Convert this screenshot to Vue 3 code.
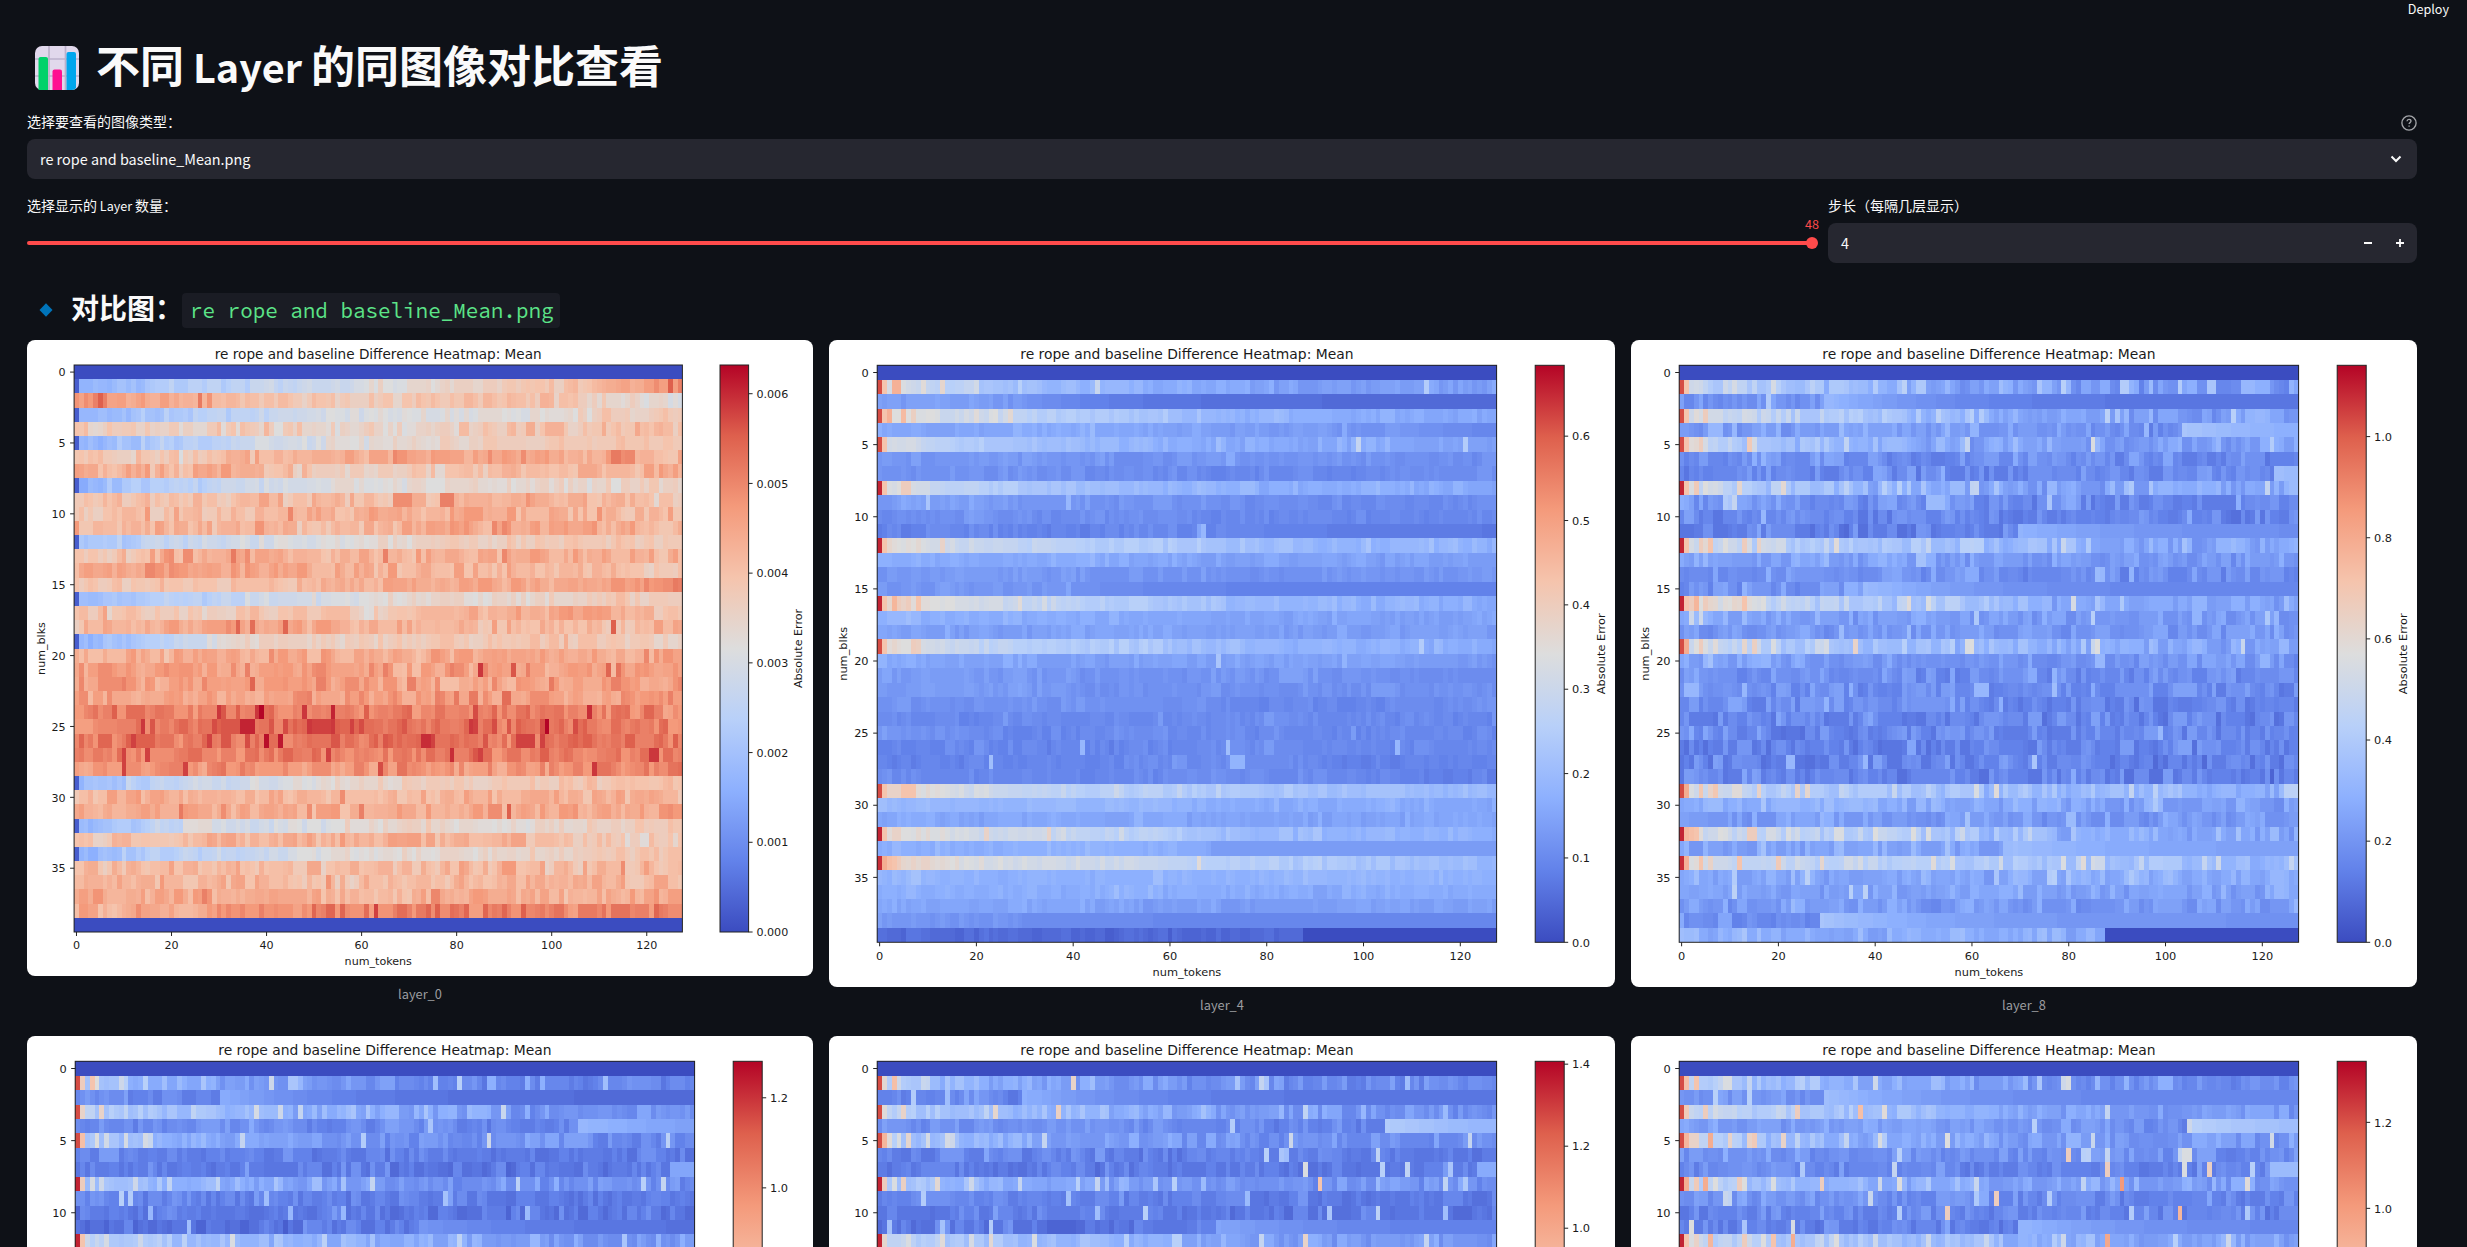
<script setup>
const COLS = 128
const ROWS = 40
const LEVELS = 72
const FOLD = 211

// coolwarm colormap control points
const COOLWARM = [
  [59, 76, 192], [98, 130, 234], [141, 176, 254], [184, 208, 249], [221, 221, 221],
  [245, 196, 173], [244, 154, 123], [222, 96, 77], [180, 4, 38],
]
function colour(v) {
  const t = Math.min(0.9999, Math.max(0, v)) * 8
  const i = Math.floor(t)
  const f = t - i
  const c = COOLWARM[i].map((a, k) => Math.round(a + (COOLWARM[i + 1][k] - a) * f))
  return `rgb(${c.join(',')})`
}

function random(seed) {
  let s = seed
  return () => {
    s = (s + 0x6d2b79f5) | 0
    let t = Math.imul(s ^ (s >>> 15), 1 | s)
    t = (t + Math.imul(t ^ (t >>> 7), 61 | t)) ^ t
    return ((t ^ (t >>> 14)) >>> 0) / 4294967296
  }
}

function along(stops, x) {
  const t = (x / (COLS - 1)) * (stops.length - 1)
  const i = Math.min(stops.length - 2, Math.floor(t))
  return stops[i] + (stops[i + 1] - stops[i]) * (t - i)
}

// per-row profiles, in percent of the colour scale
const WARM = [
  '0 0', '27 35 40 46 52 58 64 78', '76 68 64 59 60 65 58 50', '27 34 40 47 50 50 55 61', '62 58 58 54 54 62 62 63',
  '27 36 43 49 54 58 60 63', '62 60 66 70 72 74 68 67', '68 66 68 58 60 66 68 66', '27 36 43 50 53 54 54 57', '60 62 65 64 66 70 67 57',
  '60 62 68 68 69 67 66 66', '65 66 66 64 71 72 71 66', '28 40 48 50 55 59 60 62', '58 67 71 68 66 71 69 66', '69 72 73 70 66 66 67 58',
  '61 62 62 67 70 70 70 80', '27 37 43 48 54 54 58 58', '62 60 60 60 63 70 70 63', '64 67 74 66 67 67 65 67', '26 37 56 57 60 61 61 58',
  '69 69 70 71 70 72 69 71', '72 72 74 74 72 74 72 72', '72 72 74 74 72 72 73 74', '71 72 72 73 72 72 71 77', '79 80 82 80 78 81 79 79',
  '80 82 86 87 82 84 86 79', '80 81 84 83 84 82 82 80', '80 81 81 81 81 82 80 82', '74 76 76 76 75 74 76 79', '29 41 46 52 58 59 62 65',
  '64 70 67 66 67 67 67 67', '70 71 71 70 70 71 69 71', '26 40 47 50 56 52 57 60', '62 64 66 67 68 66 60 58', '25 39 44 50 53 54 59 62',
  '62 65 64 64 67 64 65 67', '65 68 67 62 64 66 66 64', '69 69 71 66 68 69 68 74', '68 70 75 78 80 79 79 81', '0 0',
]
const COOL = [
  '0 0', '49 35 28 26 22 20 20 20', '20 20 16 10 9 8 8 8', '52 43 37 33 27 25 23 22', '22 21 24 21 20 19 15 11',
  '49 36 30 26 23 23 22 21', '18 18 17 16 18 17 16 15', '16 17 16 15 15 14 15 17', '50 38 31 28 25 24 24 22', '19 20 17 17 16 15 14 15',
  '14 17 15 16 14 14 14 14', '13 14 12 14 14 13 11 11', '55 43 38 36 31 27 26 26', '24 22 23 22 20 20 19 20', '17 19 18 17 16 17 17 18',
  '18 18 17 14 13 13 13 13', '57 46 40 35 29 27 25 24', '26 24 23 22 22 21 20 20', '21 19 20 21 20 19 19 19', '53 41 37 33 28 25 25 24',
  '23 21 20 20 20 21 20 18', '19 19 17 17 17 16 16 16', '18 19 17 16 17 16 16 16', '17 16 17 17 14 14 14 17', '15 14 14 14 15 14 14 14',
  '19 15 13 16 14 14 14 14', '13 13 13 13 15 14 14 14', '13 12 14 14 16 13 12 13', '15 14 13 14 15 14 13 12', '56 45 40 36 34 31 29 29',
  '27 27 27 27 24 23 23 22', '22 21 22 21 21 20 21 22', '54 46 42 37 30 27 26 25', '24 24 25 25 21 20 20 20', '58 48 46 42 38 34 31 28',
  '27 25 25 25 25 27 26 25', '24 24 23 25 23 23 23 23', '22 20 22 20 19 20 20 20', '18 17 16 16 16 16 16 16', '8 6 6 6 6 6 6 6',
]
const HOT = [1, 3, 5, 8, 12, 16, 19, 29, 32, 34]

function build(o) {
  const rnd = random(o.seed)
  const profile = (o.warm ? WARM : COOL).map((r) => r.split(' ').map((n) => n / 100))
  const grid = []
  for (let r = 0; r < ROWS; r++) {
    const line = []
    const hot = HOT.includes(r)
    const blank = r === 0 || (o.warm && r === 39)
    let noise = 0
    for (let c = 0; c < COLS; c++) {
      let v = along(profile[r], c)
      if (!o.warm) v = v * (hot ? o.hot : o.cold)
      if (!o.warm && r === 39 && o.last) v = o.last
      if (rnd() > 0.22) {
        noise = (rnd() + rnd() - 1) * o.noise
        if (!o.warm && noise < 0) noise *= 0.65
        if (rnd() < o.peak) noise += o.noise * (0.5 + rnd() * 0.6)
      }
      const busy = o.warm ? (hot || r === 15 || r === 2 ? 0.65 : 1) : hot ? 1.35 : 1
      v += noise * busy
      if (hot && c === 0) v = o.warm ? 0 : 0.9 + (r % 4 === 0 ? 0.06 : 0) + (r === 34 ? 0.04 : 0)
      if (hot && c === 1 && !o.warm) v = 0.62
      line.push(blank ? 0 : Math.max(0.04, v))
    }
    grid.push(line)
  }
  for (const [r, from, a, b] of o.tails || []) {
    for (let c = from; c < COLS; c++) {
      grid[r][c] = b + (a - b) * Math.exp(-(c - from) / 22)
    }
  }
  for (const group of o.peaks.split(';')) {
    const [r, list] = group.split(':')
    for (const item of list.trim().split(' ')) {
      const [c, v] = item.split('=')
      grid[+r][+c] = v / 100
    }
  }
  if (!o.warm) for (let c = 88; c < COLS; c++) grid[39][c] = 0
  return grid
}

function paths(grid, p) {
  const cw = (p.right - p.left) / COLS
  const ch = (p.bottom - p.top) / ROWS
  const byLevel = {}
  grid.forEach((line, r) => {
    const y1 = (p.top + r * ch).toFixed(2)
    const y2 = (p.top + (r + 1) * ch).toFixed(2)
    for (let c = 0; c < COLS; ) {
      const level = Math.round(line[c] * LEVELS)
      let e = c + 1
      while (e < COLS && Math.round(line[e] * LEVELS) === level) e++
      const x1 = (p.left + c * cw).toFixed(2)
      const x2 = (p.left + e * cw).toFixed(2)
      byLevel[level] = (byLevel[level] || '') + `M${x1} ${y1}H${x2}V${y2}H${x1}Z`
      c = e
    }
  })
  return Object.entries(byLevel).map(([l, d]) => ({ d, fill: colour(l / LEVELS) }))
}

const NARROW = { height: 636, left: 47.1, right: 655.4, top: 25, bottom: 592, bar: 693, barEnd: 721.6, font: 11.12, title: 13.6, yNum: 38.6, xNum: 609.4, xName: 625.3, barName: 775.4 }
const WIDE = { height: 647, left: 48.2, right: 667.6, top: 25.3, bottom: 602.3, bar: 706.2, barEnd: 735.2, font: 11.35, title: 13.87, yNum: 39.6, xNum: 619.8, xName: 635.6, barName: 776 }

const specs = [
  { name: 'layer_0', plot: NARROW, max: 0.00632, step: 0.001, digits: 3, warm: true, seed: 11, noise: 0.088, peak: 0.045,
    peaks: '2:4=80 5=88 6=80 26=82 28=76;6:22=49 23=60;11:0=75;18:37=85 44=86 113=88;21:85=93 92=89 112=86;24:8=87 30=93 39=100 48=93 54=96 108=94;25:29=90 49=93 50=91 51=92 52=91 53=92 54=93 58=91 83=93 99=100 105=90;26:12=92 28=92 40=98 73=95 74=95 75=91 98=92;27:10=91 15=92 53=92 121=93 122=93;28:10=91 23=92 64=90 109=93;1:125=87 122=78 127=80;17:61=50 62=51' },
  { name: 'layer_4', plot: WIDE, max: 0.684, step: 0.1, digits: 1, seed: 24, hot: 1, cold: 1.02, noise: 0.034, peak: 0.05,
    tails: [[2, 31, 0.17, 0.07], [4, 105, 0.2, 0.1], [11, 70, 0.15, 0.1], [15, 40, 0.17, 0.12], [33, 69, 0.2, 0.19], [38, 29, 0.16, 0.14]],
    peaks: '1:3=68 4=68 9=52 13=54 18=42 19=41 20=46 29=38 45=43 113=36;3:2=68 5=65 7=57 10=50 11=50 12=49 20=52 23=48 24=50 27=53 66=34;5:99=42 121=36;8:5=58 6=58 39=33;9:10=34 39=28;11:66=22 67=28;12:13=56 66=37 101=33;16:3=67 8=62 29=51 34=47;19:7=58 8=57 55=38 112=36;20:70=34;29:5=62 6=63 7=62 49=45 50=40;32:3=55 4=55 22=55 35=55 50=46;34:1=70 2=64 3=62 66=51;26:42=28 72=30 107=28;27:23=30 73=27 74=27 75=26' },
  { name: 'layer_8', plot: WIDE, max: 1.141, step: 0.2, digits: 1, seed: 37, hot: 0.87, cold: 0.9, noise: 0.08, peak: 0.09, last: 0.24,
    tails: [[2, 30, 0.28, 0.09], [4, 104, 0.33, 0.2], [7, 123, 0.3, 0.27], [11, 70, 0.26, 0.15], [15, 38, 0.29, 0.13], [33, 69, 0.3, 0.2], [38, 29, 0.33, 0.17]],
    peaks: '1:3=46 4=45 9=44 18=35 19=47 26=34 40=36 74=34 79=38 109=33;2:18=36;3:5=59 10=43 11=42 20=43 24=43 37=38 42=38 60=38 88=39 114=37;5:2=52 4=58 10=42 14=60 15=46 34=40 59=41 85=48 122=36;8:3=60 5=50 12=54 21=53 42=38 61=42 121=41;9:9=36 10=34 11=42 76=34;10:17=28;12:1=62 4=59 9=50 13=58 30=42 32=51 51=42 79=43;16:3=67 5=58 13=62 16=47 47=52 51=49 81=47;17:2=45 4=45 61=35 85=38 121=35;19:1=70 3=50 4=58 7=51 15=57 36=55 59=49 60=50 85=43 86=50 116=43;22:77=31;27:22=28 23=28 73=34;29:1=70 4=61 6=56 16=55 24=56 26=54 61=49 65=52 93=42;32:1=66 3=62 8=50 22=49 48=50 51=49 58=45;34:1=68 4=62 6=56 12=63 20=60 29=54 52=51 56=49 79=49 83=52 85=47 108=42 111=44;35:26=39 93=35;36:11=39 35=38 38=39' },
  { name: 'layer_12', plot: WIDE, max: 1.281, step: 0.2, digits: 1, seed: 52, hot: 0.7, cold: 0.68, noise: 0.062, peak: 0.08,
    tails: [[2, 30, 0.24, 0.07], [4, 104, 0.28, 0.17], [7, 123, 0.22, 0.2], [11, 71, 0.18, 0.08]],
    peaks: '1:1=58 3=62 4=50 9=44 10=38 18=31 26=34 40=44 44=34 45=33 74=30 79=38 109=30;3:1=56 5=55 10=40 13=38 24=40 37=47 42=44 46=42 60=34 72=34 88=43;4:73=34;5:1=64 4=50 6=46 10=47 14=47 15=43 34=41 59=36 85=44 122=39;8:1=58 3=47 5=45 12=45 19=40 29=40 41=34 61=41 91=39 117=37 121=41;9:9=38 11=36 39=30 76=32;10:15=28 44=28 55=28 93=29;11:23=30;12:6=47 13=44 19=38 32=49 51=39 79=40 113=34' },
  { name: 'layer_16', plot: WIDE, max: 1.407, step: 0.2, digits: 1, seed: 68, hot: 0.72, cold: 0.7, noise: 0.058, peak: 0.07,
    tails: [[2, 30, 0.25, 0.09], [4, 105, 0.36, 0.22], [7, 124, 0.24, 0.23], [11, 70, 0.22, 0.11]],
    peaks: '1:1=53 3=64 4=44 9=43 10=42 14=34 40=55 44=30 74=33 79=42 80=33 109=30;2:7=36 14=30;3:1=52 5=56 7=38 10=38 19=33 24=54 37=57 42=34 46=33 88=40;4:73=36;5:1=66 2=52 4=48 6=54 10=47 14=47 15=45 34=41 85=45 122=41;6:80=38 83=33 84=31 103=40;7:88=49 104=38 109=40 118=34;8:1=58 3=48 5=57 12=53 19=44 29=42 41=38 45=42 61=38 91=62 117=40 121=35;9:9=36 39=32 76=29;10:45=30 55=38 93=33 103=39 117=30;11:2=32 13=32 23=36;12:1=54 6=49 13=51 19=47 23=53 32=48 51=38 79=42 88=56 113=42' },
  { name: 'layer_20', plot: WIDE, max: 1.342, step: 0.2, digits: 1, seed: 83, hot: 0.82, cold: 0.88, noise: 0.065, peak: 0.08,
    tails: [[2, 30, 0.3, 0.13], [4, 105, 0.38, 0.26], [7, 122, 0.29, 0.27], [11, 70, 0.27, 0.13]],
    peaks: '1:1=64 3=62 9=48 10=48 14=41 40=45 74=34 79=44 80=48;2:7=37 14=37;3:1=60 5=58 7=47 19=38 24=58 37=64 42=52 46=35 88=41;4:73=38 105=44;5:1=66 2=56 3=56 6=69 10=55 14=56 15=60 21=56 34=42 41=49 55=50 85=43 122=46;6:45=38 80=59 83=38 84=39 88=42 103=41 104=49 105=48;7:25=35 44=42 88=58 104=49 109=57 118=38;8:1=70 3=60 5=70 7=50 12=58 13=50 19=48 29=59 41=44 45=50 61=43 83=40 91=75 117=51;9:9=43 10=40 39=43 61=35 65=59 76=36;10:45=36 55=58 93=36 103=67 117=35;11:2=50 13=34 23=47;12:1=62 3=55 6=66 13=58 17=50 19=62 23=70 32=50 51=44 79=44 88=71 102=38 113=44' },
]

const charts = specs.map((s, i) => {
  const p = s.plot
  const h = p.bottom - p.top
  const full = i < 3
  const limit = full ? p.height : FOLD - 8
  const barTicks = []
  for (let k = 0; k * s.step <= s.max; k++) {
    const v = k * s.step
    barTicks.push({ y: p.bottom - (v / s.max) * h, label: v.toFixed(s.digits) })
  }
  return {
    id: i,
    name: s.name,
    p,
    full,
    cells: paths(build(s), p),
    barTicks: barTicks.filter((t) => t.y < limit),
    xTicks: full ? [0, 20, 40, 60, 80, 100, 120].map((v) => ({ v, x: p.left + ((v + 0.5) / COLS) * (p.right - p.left) })) : [],
    yTicks: [0, 5, 10, 15, 20, 25, 30, 35].map((v) => ({ v, y: p.top + ((v + 0.5) / ROWS) * h })).filter((t) => t.y < limit),
    midX: (p.left + p.right) / 2,
    midY: (p.top + p.bottom) / 2,
  }
})
const stops = Array.from({ length: 17 }, (_, i) => ({ offset: i / 16, color: colour(1 - i / 16) }))
</script>

<template>
  <div class="app">
    <header class="toolbar"><span>Deploy</span></header>
    <main class="page">
      <h1 class="title">
        <svg class="chart-icon" viewBox="0 0 44 44">
          <rect width="44" height="44" rx="7" fill="#e1d8ec" />
          <path d="M14 0V44M30.500 0V44M0 13H44M0 30H44" stroke="#bcb1cb" stroke-width="1.700" />
          <path d="M3.500 44V13a2 2 0 0 1 2-2h5.500a2 2 0 0 1 2 2V44H7z" fill="#00d26a" />
          <path d="M17.500 44V25.500a2 2 0 0 1 2-2h5.500a2 2 0 0 1 2 2V44z" fill="#ff0f91" />
          <path d="M31.500 44V8a2 2 0 0 1 2-2h5.500a2 2 0 0 1 2 2V42q-1 2-4 2z" fill="#00a6ed" />
        </svg>
        <span class="title-text">不同<span class="latin"> Layer </span>的同图像对比查看</span>
      </h1>

      <div class="label">
        <span>选择要查看的图像类型：</span>
        <svg class="help" viewBox="0 0 16 16" fill="none" stroke="#a3a5a9" stroke-width="1.350">
          <circle cx="8" cy="8" r="7.100" />
          <path d="M6 6.200C6.100 4.900 7 4.300 8 4.300s2 .7 2 1.800c0 1.500-1.900 1.500-1.900 3M8.100 10.400v1.400" />
        </svg>
      </div>
      <div class="field select">
        <span>re rope and baseline_Mean.png</span>
        <svg class="chevron" viewBox="0 0 12 8"><path d="M1.500 1.500 6 6l4.500-4.500" fill="none" stroke="#fafafa" stroke-width="2" /></svg>
      </div>

      <div class="controls">
        <div class="slider">
          <div class="label"><span>选择显示的<span class="latin"> Layer </span>数量：</span></div>
          <div class="track"><i class="thumb"><b>48</b></i></div>
        </div>
        <div class="stepper">
          <div class="label"><span>步长（每隔几层显示）</span></div>
          <div class="field number">
            <span class="value">4</span>
            <svg class="sign" viewBox="0 0 8 8"><path d="M0 4H8" stroke="#fafafa" stroke-width="2" /></svg>
            <svg class="sign" viewBox="0 0 8 8"><path d="M0 4H8M4 0V8" stroke="#fafafa" stroke-width="1.800" /></svg>
          </div>
        </div>
      </div>

      <h3 class="subtitle">
        <svg class="diamond" viewBox="0 0 14 14"><path d="M7 .3 13.500 7 7 13.700.5 7z" fill="#0074ba" /></svg>
        <span class="subtitle-text">对比图：</span>
        <code>re rope and baseline_Mean.png</code>
      </h3>

      <section class="grid">
        <figure v-for="c in charts" :key="c.id" class="figure">
          <svg class="plot" width="786" :height="c.p.height" :viewBox="`0 0 786 ${c.p.height}`" :font-size="c.p.font">
            <defs>
              <linearGradient :id="`bar-${c.id}`" x1="0" y1="0" x2="0" y2="1">
                <stop v-for="s in stops" :key="s.offset" :offset="s.offset" :stop-color="s.color" />
              </linearGradient>
            </defs>
            <text :x="c.midX" y="18.600" text-anchor="middle" :font-size="c.p.title">re rope and baseline Difference Heatmap: Mean</text>
            <g shape-rendering="crispEdges">
              <path v-for="cell in c.cells" :key="cell.fill" :d="cell.d" :fill="cell.fill" />
            </g>
            <g fill="none" stroke="#222" stroke-width="1">
              <rect :x="c.p.left" :y="c.p.top" :width="c.p.right - c.p.left" :height="c.p.bottom - c.p.top" />
              <rect :x="c.p.bar" :y="c.p.top" :width="c.p.barEnd - c.p.bar" :height="c.p.bottom - c.p.top" :fill="`url(#bar-${c.id})`" />
              <path v-for="t in c.xTicks" :key="'x' + t.v" :d="`M${t.x} ${c.p.bottom}v4`" />
              <path v-for="t in c.yTicks" :key="'y' + t.v" :d="`M${c.p.left} ${t.y}h-4`" />
              <path v-for="t in c.barTicks" :key="'b' + t.label" :d="`M${c.p.barEnd} ${t.y}h4`" />
            </g>
            <text v-for="t in c.xTicks" :key="'xl' + t.v" :x="t.x" :y="c.p.xNum" text-anchor="middle">{{ t.v }}</text>
            <text v-for="t in c.yTicks" :key="'yl' + t.v" :x="c.p.yNum" :y="t.y + 4.200" text-anchor="end">{{ t.v }}</text>
            <text v-for="t in c.barTicks" :key="'bl' + t.label" :x="c.p.barEnd + 7.800" :y="t.y + 4.200">{{ t.label }}</text>
            <template v-if="c.full">
              <text :x="c.midX" :y="c.p.xName" text-anchor="middle">num_tokens</text>
              <text :transform="`translate(18.200 ${c.midY}) rotate(-90)`" text-anchor="middle">num_blks</text>
              <text :transform="`translate(${c.p.barName} ${c.midY}) rotate(-90)`" text-anchor="middle">Absolute Error</text>
            </template>
          </svg>
          <figcaption v-if="c.full">{{ c.name }}</figcaption>
        </figure>
      </section>
    </main>
  </div>
</template>

<style>
body {
  margin: 0;
  background: #0e1117;
  overflow: hidden;
}
</style>

<style scoped>
.app {
  height: 1247px;
  overflow: hidden;
  background: #0e1117;
  color: #fafafa;
  font-family: "Source Sans Pro", "Noto Sans CJK SC", sans-serif;
  font-size: 14.400px;
}
.toolbar {
  display: flex;
  justify-content: flex-end;
  height: 18px;
  padding-right: 18px;
  font-size: 12.600px;
  line-height: 18px;
}
.page {
  padding: 0 50px 0 27px;
}
.title {
  display: flex;
  align-items: center;
  gap: 17px;
  height: 94px;
  margin: 0;
  padding-left: 8px;
  box-sizing: border-box;
  font-size: 44px;
  font-weight: 700;
  line-height: 60px;
  white-space: nowrap;
}
.latin {
  font-size: 0.9em;
  white-space: pre;
}
.title-text {
  margin-top: 0;
}
.chart-icon {
  width: 44px;
  height: 44px;
  margin-top: 6px;
}
.label {
  display: flex;
  align-items: center;
  justify-content: space-between;
  height: 20px;
  margin-bottom: 7px;
  font-size: 14px;
  line-height: 20px;
}
.label > span {
  margin-top: -2px;
}
.help {
  width: 16px;
  height: 16px;
  margin-top: 2px;
}
.field {
  display: flex;
  align-items: center;
  height: 40px;
  box-sizing: border-box;
  border-radius: 8px;
  background: #262730;
  line-height: 24px;
}
.field > span {
  margin-top: -1px;
}
.select {
  justify-content: space-between;
  padding: 0 15px 0 13px;
}
.chevron {
  width: 12px;
  height: 8px;
}
.controls {
  display: flex;
  gap: 16px;
  height: 84px;
  margin-top: 17px;
}
.slider {
  width: 1785px;
}
.track {
  position: relative;
  height: 4px;
  margin-top: 25px;
  border-radius: 4px;
  background: #ff4b4b;
}
.thumb {
  position: absolute;
  right: -6px;
  top: -4px;
  width: 12px;
  height: 12px;
  border-radius: 50%;
  background: #ff4b4b;
}
.thumb b {
  position: absolute;
  right: -1px;
  bottom: 15px;
  color: #ff4b4b;
  font-size: 12.600px;
  font-weight: 400;
  font-style: normal;
  line-height: 20px;
}
.stepper {
  flex: 1;
}
.number {
  gap: 24px;
  padding: 0 13px;
}
.value {
  flex: 1;
}
.sign {
  width: 8px;
  height: 8px;
}
.subtitle {
  display: flex;
  align-items: center;
  height: 36px;
  margin: 12px 0 12px;
  padding-left: 12px;
  font-size: 28px;
  font-weight: 700;
  line-height: 36px;
  white-space: nowrap;
}
.subtitle-text {
  width: 111px;
  margin-top: -7px;
}
.diamond {
  width: 14px;
  height: 14px;
  margin-right: 18px;
  margin-top: -1px;
}
.subtitle code {
  height: 35px;
  margin-top: 0;
  padding: 0 6px 0 8px;
  border-radius: 4px;
  background: #1a1c24;
  color: #5ce488;
  font-family: "Source Code Pro", "Noto Sans Mono CJK SC", "Liberation Mono", monospace;
  font-size: 20.900px;
  font-weight: 400;
  line-height: 35px;
}
.grid {
  display: grid;
  grid-template-columns: repeat(3, 786px);
  gap: 0 16px;
  align-items: start;
}
.figure {
  margin: 0 0 20px;
}
.plot {
  display: block;
  border-radius: 8px;
  background: #fff;
  fill: #1a1a1a;
  font-family: "DejaVu Sans", sans-serif;
}
figcaption {
  height: 20px;
  margin-top: 8px;
  padding-bottom: 1px;
  color: #9c9da0;
  font-size: 12.800px;
  line-height: 20px;
  text-align: center;
}
</style>
